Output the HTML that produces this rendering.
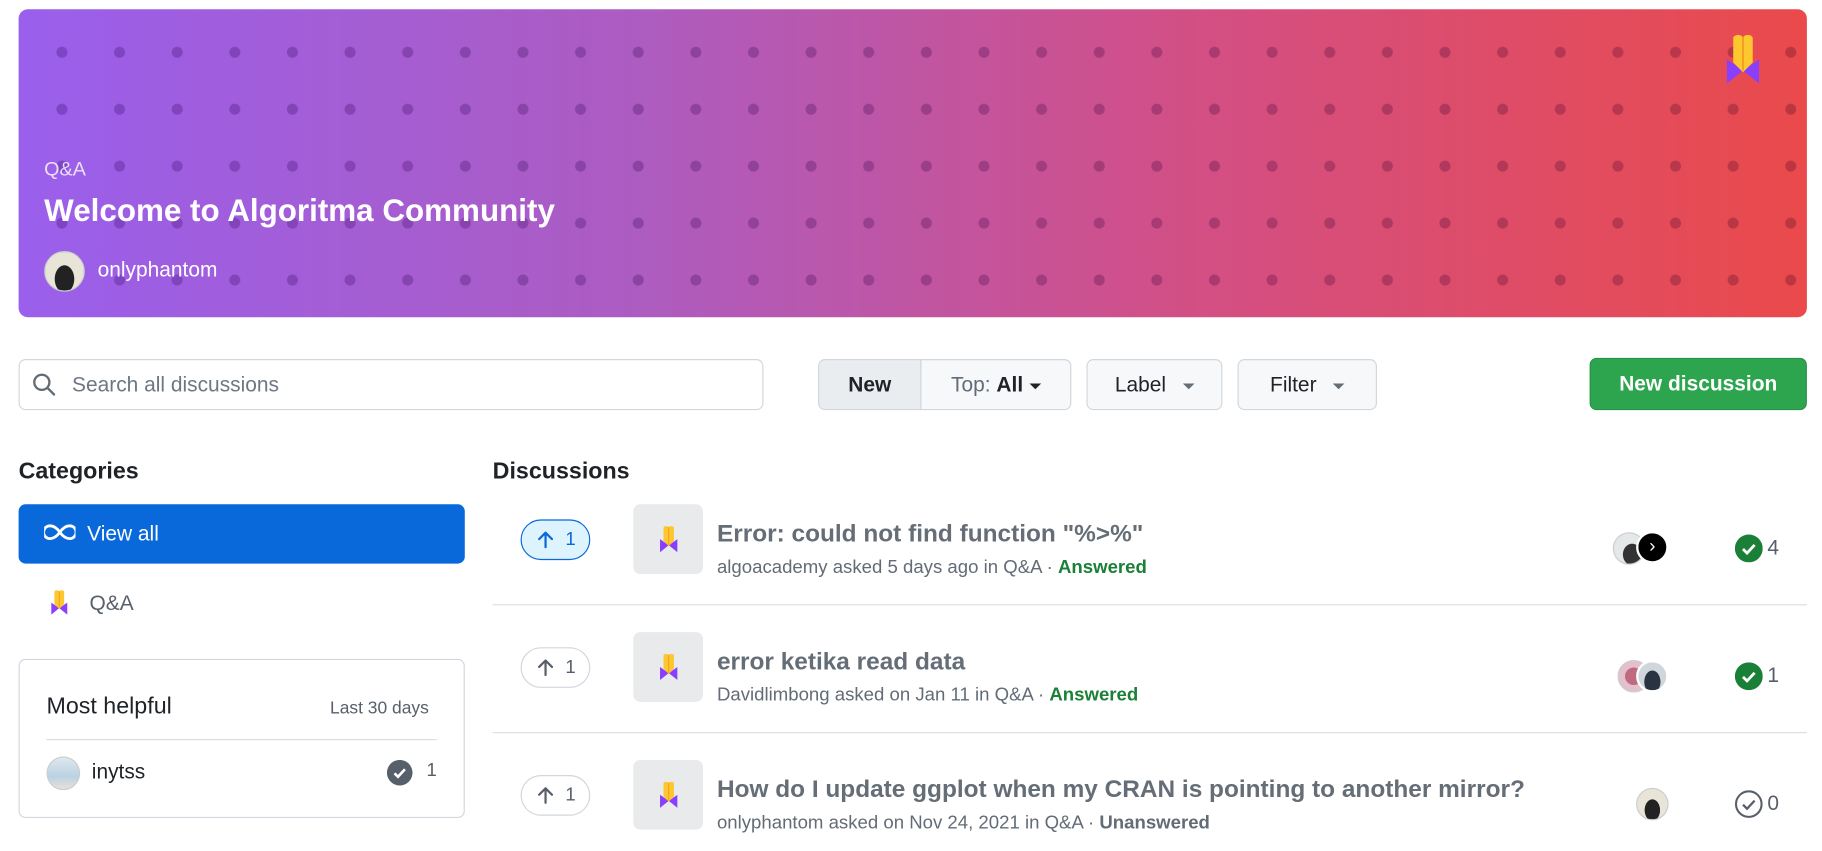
<!DOCTYPE html>
<html><head><meta charset="utf-8">
<style>
html,body{margin:0;padding:0;background:#fff;overflow:hidden}
body{width:1822px;height:850px;font-family:"Liberation Sans",sans-serif;color:#1f2328}
#w{position:absolute;left:0;top:0;width:1568px;height:732px;transform:scale(1.16199);transform-origin:0 0}
.a{position:absolute}
.banner{left:16px;top:8px;width:1539px;height:265px;border-radius:8px;overflow:hidden;isolation:isolate;
background:linear-gradient(90deg,#9a5fec 0%,#ad5cc0 35%,#d24f86 65%,#ea4a4b 100%)}
.dots{left:0;top:0;right:0;bottom:0;mix-blend-mode:multiply;background-image:radial-gradient(circle,rgb(205,185,215) 4.5px,transparent 5px);background-size:49.6px 49px;background-position:12.5px 12.5px}
.btn{border:1px solid #d0d7de;background:#f6f8fa;border-radius:6px;box-sizing:border-box;height:44px;font-size:18px;font-weight:bold;display:flex;align-items:center;justify-content:center}
.caret{display:inline-block;width:0;height:0;border-left:5px solid transparent;border-right:5px solid transparent;border-top:5px solid #1f2328;margin-left:9px;margin-top:2px}
.vote{width:60px;height:35px;border:1px solid #d0d7de;border-radius:18px;box-sizing:border-box;display:flex;align-items:center;justify-content:center;font-size:16px;color:#57606a;gap:9px}
.ib{width:60px;height:60px;background:#e9eaec;border-radius:6px;display:flex;align-items:center;justify-content:center}
.t{font-size:21px;color:#656d76;font-weight:bold;white-space:nowrap}
.m{font-size:16px;color:#636c76;white-space:nowrap}
.ok{color:#1a7f37;font-weight:bold}
.hr{height:1px;background:#d8dee4}
.av{border-radius:50%;border:1px solid #ccc;box-sizing:border-box}
</style></head><body>
<svg width="0" height="0" style="position:absolute"><defs>
<symbol id="pr" viewBox="0 0 20 32">
<polygon points="0,16 10,23 0,31" fill="#8a3ffc"/><polygon points="20,16 10,23 20,31" fill="#8a3ffc"/>
<path d="M4,3 a3,2 0 0 1 6,0 a3,2 0 0 1 6,0 V18 L10,24 L4,18 Z" fill="#fcc72f"/><line x1="10" y1="2" x2="10" y2="23" stroke="#f09a1a" stroke-width="1"/>
</symbol>
<symbol id="up" viewBox="0 0 16 16"><path d="M8,14 V2.5 M2.8,7.5 L8,2.3 L13.2,7.5" fill="none" stroke="currentColor" stroke-width="1.8" stroke-linecap="round" stroke-linejoin="round"/></symbol>
</defs></svg>
<div id="w">
<div class="a banner"><div class="a dots"></div>
<svg class="a" style="left:1470px;top:20px" width="28" height="46"><use href="#pr"/></svg>
<div class="a" style="left:22px;top:128px;font-size:17px;color:rgba(255,255,255,.8)">Q&amp;A</div>
<div class="a" style="left:22px;top:158px;font-size:27px;font-weight:bold;color:#fff">Welcome to Algoritma Community</div>
<div class="a av" style="left:22px;top:208px;width:35px;height:35px;background:radial-gradient(ellipse at 50% 70%,#222 0 35%,#e8e4d8 37%)"></div>
<div class="a" style="left:68px;top:214px;font-size:18px;color:#fff">onlyphantom</div>
</div>

<div class="a" style="left:16px;top:309px;width:641px;height:44px;border:1px solid #d0d7de;border-radius:6px;box-sizing:border-box"></div>
<svg class="a" style="left:28px;top:321px" width="20" height="20" viewBox="0 0 20 20"><circle cx="8" cy="8" r="6.5" fill="none" stroke="#636c76" stroke-width="2"/><line x1="13" y1="13" x2="18.5" y2="18.5" stroke="#636c76" stroke-width="2" stroke-linecap="round"/></svg>
<div class="a" style="left:62px;top:321px;font-size:18px;color:#6e7781">Search all discussions</div>

<div class="a btn" style="left:704px;top:309px;width:89px;background:#eaedf0;border-radius:6px 0 0 6px">New</div>
<div class="a btn" style="left:792px;top:309px;width:130px;border-radius:0 6px 6px 0;font-weight:normal;color:#636c76">Top:&nbsp;<b style="color:#1f2328">All</b><span class="caret" style="margin-left:5px"></span></div>
<div class="a btn" style="left:935px;top:309px;width:117px;font-weight:normal">Label<span class="caret" style="border-top-color:#656d76;margin-left:14px"></span></div>
<div class="a btn" style="left:1065px;top:309px;width:120px;font-weight:normal">Filter<span class="caret" style="border-top-color:#656d76;margin-left:14px"></span></div>
<div class="a btn" style="left:1368px;top:308px;width:187px;height:45px;background:#2da44e;border-color:#2a9147;color:#fff;font-weight:bold">New discussion</div>

<div class="a" style="left:16px;top:395px;font-size:20px;font-weight:bold">Categories</div>
<div class="a" style="left:16px;top:434px;width:384px;height:51px;background:#0969da;border-radius:6px"></div>
<svg class="a" style="left:38px;top:451px" width="27" height="14" viewBox="0 0 27 14"><path d="M13.5,7 C10,2 7,1.5 5,1.5 A5.5,5.5 0 0 0 5,12.5 C7,12.5 10,12 13.5,7 C17,2 20,1.5 22,1.5 A5.5,5.5 0 0 1 22,12.5 C20,12.5 17,12 13.5,7Z" fill="none" stroke="#fff" stroke-width="2.4"/></svg>
<div class="a" style="left:75px;top:449px;font-size:18px;color:#fff">View all</div>
<svg class="a" style="left:44px;top:507px" width="14" height="23"><use href="#pr"/></svg>
<div class="a" style="left:77px;top:509px;font-size:18px;color:#57606a">Q&amp;A</div>

<div class="a" style="left:16px;top:567px;width:384px;height:137px;border:1px solid #d0d7de;border-radius:6px;box-sizing:border-box"></div>
<div class="a" style="left:40px;top:597px;font-size:20px">Most helpful</div>
<div class="a" style="left:284px;top:601px;font-size:15px;color:#57606a">Last 30 days</div>
<div class="a hr" style="left:40px;top:636px;width:336px"></div>
<div class="a av" style="left:40px;top:651px;width:29px;height:29px;background:linear-gradient(#dfe8ef,#b9d2e1 60%,#e7e2dc)"></div>
<div class="a" style="left:79px;top:654px;font-size:18px">inytss</div>
<svg class="a" style="left:333px;top:654px" width="22" height="22" viewBox="0 0 22 22"><circle cx="11" cy="11" r="11" fill="#57606a"/><path d="M6.5,11.5 L9.5,14.5 L15.5,8" fill="none" stroke="#fff" stroke-width="2.2"/></svg>
<div class="a" style="left:367px;top:655px;font-size:16px;color:#57606a">1</div>

<div class="a" style="left:424px;top:395px;font-size:20px;font-weight:bold">Discussions</div>

<!-- row 1 -->
<div class="a vote" style="left:448px;top:447px;background:#ddf4ff;border-color:#0969da;color:#0969da"><svg width="17" height="17"><use href="#up"/></svg>1</div>
<div class="a ib" style="left:545px;top:434px"><svg width="15" height="24"><use href="#pr"/></svg></div>
<div class="a t" style="left:617px;top:448px">Error: could not find function "%&gt;%"</div>
<div class="a m" style="left:617px;top:480px">algoacademy asked 5 days ago in Q&amp;A · <span class="ok">Answered</span></div>
<div class="a av" style="left:1388px;top:458px;width:28px;height:28px;background:radial-gradient(ellipse at 60% 70%,#333 0 35%,#e4e8e8 37%)"></div>
<div class="a" style="left:1408px;top:457px;width:28px;height:28px;border-radius:50%;background:#000;border:2px solid #fff;box-sizing:border-box;color:#fff;font-size:16px;text-align:center;line-height:23px">›</div>
<svg class="a" style="left:1493px;top:460px" width="24" height="24" viewBox="0 0 24 24"><circle cx="12" cy="12" r="12" fill="#1a7f37"/><path d="M7,12.5 L10.5,16 L17,9" fill="none" stroke="#fff" stroke-width="2.4"/></svg>
<div class="a" style="left:1521px;top:461px;font-size:18px;color:#57606a">4</div>
<div class="a hr" style="left:424px;top:520px;width:1131px"></div>

<!-- row 2 -->
<div class="a vote" style="left:448px;top:557px"><svg width="17" height="17"><use href="#up"/></svg>1</div>
<div class="a ib" style="left:545px;top:544px"><svg width="15" height="24"><use href="#pr"/></svg></div>
<div class="a t" style="left:617px;top:558px">error ketika read data</div>
<div class="a m" style="left:617px;top:590px">Davidlimbong asked on Jan 11 in Q&amp;A · <span class="ok">Answered</span></div>
<div class="a av" style="left:1392px;top:568px;width:28px;height:28px;background:radial-gradient(circle,#c06a80 0 40%,#e2c0cc 42%)"></div>
<div class="a av" style="left:1408px;top:568px;width:28px;height:28px;border:2px solid #fff;background:radial-gradient(ellipse at 50% 70%,#2a3340 0 40%,#cfd6dc 42%)"></div>
<svg class="a" style="left:1493px;top:570px" width="24" height="24" viewBox="0 0 24 24"><circle cx="12" cy="12" r="12" fill="#1a7f37"/><path d="M7,12.5 L10.5,16 L17,9" fill="none" stroke="#fff" stroke-width="2.4"/></svg>
<div class="a" style="left:1521px;top:571px;font-size:18px;color:#57606a">1</div>
<div class="a hr" style="left:424px;top:630px;width:1131px"></div>

<!-- row 3 -->
<div class="a vote" style="left:448px;top:667px"><svg width="17" height="17"><use href="#up"/></svg>1</div>
<div class="a ib" style="left:545px;top:654px"><svg width="15" height="24"><use href="#pr"/></svg></div>
<div class="a t" style="left:617px;top:668px">How do I update ggplot when my CRAN is pointing to another mirror?</div>
<div class="a m" style="left:617px;top:700px">onlyphantom asked on Nov 24, 2021 in Q&amp;A · <b style="color:#636c76">Unanswered</b></div>
<div class="a av" style="left:1408px;top:678px;width:28px;height:28px;background:radial-gradient(ellipse at 50% 70%,#222 0 35%,#e8e4d8 37%)"></div>
<svg class="a" style="left:1493px;top:680px" width="24" height="24" viewBox="0 0 24 24"><circle cx="12" cy="12" r="11" fill="none" stroke="#57606a" stroke-width="1.8"/><path d="M7,12.5 L10.5,16 L17,9" fill="none" stroke="#57606a" stroke-width="2"/></svg>
<div class="a" style="left:1521px;top:681px;font-size:18px;color:#57606a">0</div>
</div>
</body></html>
